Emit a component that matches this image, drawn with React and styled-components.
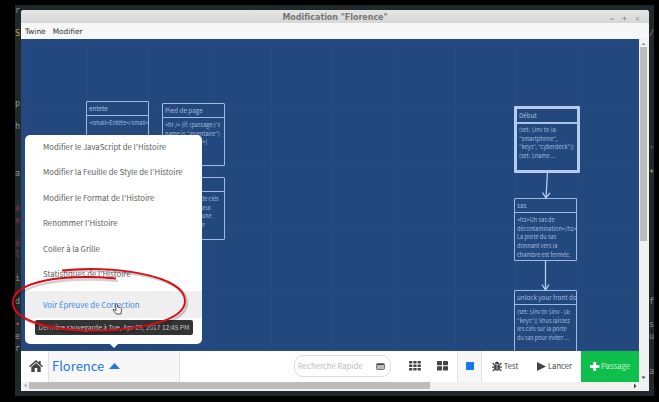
import React from "react";
import styled, { createGlobalStyle, css } from "styled-components";

const Global = createGlobalStyle`
  * { box-sizing: border-box; }
  html, body { margin: 0; background: #000; overflow: hidden; }
  body { font-family: "Noto Sans CJK SC", "Noto Sans", sans-serif; }
`;

const Screen = styled.main`
  width: 659px;
  height: 402px;
  padding: 5px 4px 6px 15px;
  background: #000;
  position: relative;
`;

const Desktop = styled.div`
  width: 639px;
  height: 391px;
  display: grid;
  grid-template-columns: 6px 628px 5px;
  background: #20282b;
  overflow: hidden;
`;

const Gutter = styled.div`
  overflow: hidden;
  font: 8.5px "DejaVu Sans Mono", monospace;
  white-space: pre;
`;

const CodeLine = styled.div`
  height: 11.65px;
  line-height: 11.65px;
  color: ${(p) => p.$color || "#8a938f"};
`;

const Win = styled.section`
  margin-top: 5px;
  width: 628px;
  height: 381px;
  display: flex;
  flex-direction: column;
  background: #fff;
  border-radius: 3px 3px 0 0;
  overflow: hidden;
`;

const TitleBar = styled.header`
  height: 13px;
  flex: none;
  display: grid;
  grid-template-columns: 1fr auto 1fr;
  align-items: center;
  background: linear-gradient(#e6e6e6, #d6d6d6);
  color: #777;
  font: bold 8px/14px "DejaVu Sans", sans-serif;
`;

const Title = styled.span`
  grid-column: 2;
  padding-top: 1px;
  letter-spacing: -0.04px;
`;

const WinButtons = styled.div`
  display: flex;
  justify-content: flex-end;
  padding-right: 8px;
`;

const MenuBar = styled.nav`
  height: 16px;
  flex: none;
  display: flex;
  gap: 7px;
  padding: 1px 0 0 4px;
  background: #f7f7f7;
  color: #333;
  font: 7.4px/15px "DejaVu Sans", sans-serif;
`;

const Body = styled.div`
  height: 343px;
  display: flex;
`;

const Page = styled.div`
  width: 618px;
  display: flex;
  flex-direction: column;
`;

const Canvas = styled.div`
  position: relative;
  height: 312px;
  overflow: hidden;
  background-color: #23487e;
  background-image: linear-gradient(90deg, #284d84 1px, transparent 1px),
    linear-gradient(#284d84 1px, transparent 1px);
  background-size: 61.3px 61.3px;
  background-position: 4.5px 4.5px;
`;

const Card = styled.article`
  position: absolute;
  left: ${(p) => p.$x}px;
  top: ${(p) => p.$y}px;
  width: ${(p) => (p.$start ? 66 : 63)}px;
  height: ${(p) => (p.$start ? 67 : 63)}px;
  border: ${(p) => (p.$start ? "3px solid #b4ccee" : "1px solid #9dbbe0")};
  border-radius: 1px;
  background: #23487e;
  color: #a3bbdb;
  overflow: hidden;
`;

const CardTitle = styled.h3`
  margin: 0;
  height: ${(p) => (p.$start ? 15 : 14)}px;
  padding-left: 2px;
  border-bottom: ${(p) => (p.$start ? "2px solid #a9c4e8" : "1px solid #9dbbe0")};
  font-weight: 400;
  font-size: 6.3px;
  line-height: 13px;
  white-space: nowrap;
`;

const CardText = styled.p`
  margin: 0;
  padding: ${(p) => (p.$start ? 2 : 3)}px 0 0 2px;
  font-size: 5.6px;
  line-height: 8.7px;
  white-space: pre;
`;

const Links = styled.svg`
  position: absolute;
  left: 0;
  top: 0;
`;

const Toolbar = styled.footer`
  height: 31px;
  display: flex;
  align-items: stretch;
  background: #fff;
  color: #444;
`;

const Tool = styled.div`
  width: ${(p) => p.$w}px;
  flex: none;
  display: flex;
  align-items: center;
  justify-content: center;
  gap: 2px;
  font-size: 7.7px;
  line-height: 12px;
  padding-bottom: 1px;
  ${(p) => p.$active && css`
    background: #f7f7f7;
    border: solid #e2e2e2;
    border-width: 0 1px;
  `}
`;

const HomeTool = styled(Tool)`
  padding-left: 3px;
`;

const StoryName = styled(Tool)`
  justify-content: flex-start;
  padding-left: 3px;
  gap: 5px;
  color: #2379dd;
  font-size: 13px;
  line-height: 20px;
`;

const Spacer = styled.div`
  flex: 1;
`;

const Search = styled.div`
  width: 97px;
  height: 22px;
  margin: 4px 9px 0 0;
  padding: 0 5px 0 3px;
  display: flex;
  align-items: center;
  justify-content: space-between;
  border: 1.5px solid #ddd;
  border-radius: 9px;
  color: #bbb;
  font-size: 7.7px;
  line-height: 12px;
`;

const NewPassage = styled(Tool)`
  background: #0fbf4b;
  color: #c5f2d3;
  gap: 1px;
`;

const VScroll = styled.div`
  width: 10px;
  padding: 0 2px 0 1px;
  display: flex;
  flex-direction: column;
  align-items: center;
  background: #f1f1f1;
`;

const VThumb = styled.div`
  width: 7px;
  height: 194px;
  background: #bcbcbc;
`;

const HScroll = styled.div`
  height: 9px;
  flex: none;
  display: flex;
  background: #f1f1f1;
`;

const HThumb = styled.div`
  width: 401px;
  height: 7px;
  background: #bcbcbc;
`;

const ArrowBox = styled.svg`
  flex: none;
`;

const Popup = styled.div`
  position: absolute;
  left: 25px;
  top: 135px;
  width: 177px;
  height: 209px;
  background: #fff;
  border-radius: 5px;
  &::after {
    content: "";
    position: absolute;
    left: 85px;
    top: 209px;
    border: 4px solid transparent;
    border-top-color: #fff;
    border-bottom: 0;
  }
`;

const MenuList = styled.ul`
  list-style: none;
  margin: 0;
  padding: 0;
`;

const MenuItem = styled.li`
  height: ${(p) => (p.$selected ? 27 : 25.4)}px;
  margin-top: ${(p) => (p.$selected ? 4 : 0)}px;
  padding-left: 18px;
  line-height: ${(p) => (p.$selected ? 27 : 24.8)}px;
  font-size: 7.77px;
  white-space: nowrap;
  color: ${(p) => (p.$selected ? "#3a88e0" : "#606060")};
  background: ${(p) => (p.$selected ? "#efefef" : "transparent")};
`;

const Tooltip = styled.div`
  position: absolute;
  left: 10px;
  top: 185px;
  width: 158px;
  height: 15px;
  border-radius: 2px;
  background: #333;
  color: #c4c4c4;
  font-size: 6.6px;
  line-height: 15px;
  text-align: center;
  white-space: nowrap;
`;

const Annotation = styled.svg`
  position: absolute;
  left: 0;
  top: 250px;
`;

const items = [
  "Modifier le JavaScript de l'Histoire",
  "Modifier la Feuille de Style de l'Histoire",
  "Modifier le Format de l'Histoire",
  "Renommer l'Histoire",
  "Coller à la Grille",
  "Statistiques de l'Histoire",
];

const cards = [
  { x: 65, y: 62, title: "entete", text: "<small>Entête</small>" },
  { x: 141, y: 64, title: "Pied de page", text: "<hr /> (if: (passage:)'s\nname is \"inventaire\")\n[[Retour->inv ->]" },
  { x: 141, y: 138, title: "", text: "Un trousseau de clés\nsur lequel un seul\nmot est écrit : une\nclé alambiquée" },
  { x: 493, y: 67, start: true, title: "Début", text: "(set: $inv to (a:\n\"smartphone\",\n\"keys\", \"cyberdeck\"))\n(set: $name ..." },
  { x: 493, y: 159, title: "sas", text: "<h2>Un sas de\ndécontamination</h2>\nLa porte du sas\ndonnant vers la\nchambre est fermée." },
  { x: 493, y: 251, title: "unlock your front doo", text: "(set: $inv to $inv - (a:\n\"keys\")) Vous laissez\nles clés sur la porte\ndu sas pour éviter ..." },
];

const leftCode = { 0: ["r"], 2: ["S", "#c9a24a"], 8: ["p"], 10: ["h"], 14: ["a"], 17: ["é", "#8c3550"], 18: ["e", "#8c3550"], 20: ["é", "#8c3550"], 21: ["l", "#8c3550"], 23: ["i"], 25: ["d"], 27: ["•", "#b04550"], 28: ["e"], 29: ["r"] };
const rightCode = { 2: ["/", "#8f79a8"], 10: [" l", "#a9b665"], 12: ["'a"], 14: ["*", "#a9b665"], 25: ["f"], 27: ["s"], 28: ["u"], 31: ["a"] };

function Code({ lines }) {
  return (
    <Gutter>
      {Array.from({ length: 33 }, (_, i) => (
        <CodeLine key={i} $color={lines[i]?.[1]}>{lines[i]?.[0] || " "}</CodeLine>
      ))}
    </Gutter>
  );
}

const HomeIcon = () => (
  <svg width="14" height="12" viewBox="0 0 14 12" fill="#444">
    <path d="M7 0 0 6.200l1 1L7 2l6 5.200 1-1-2.300-2V1H10v1.600zM7 3 2.300 7.100V12H5.700V8h2.600v4h3.400V7.100z" />
  </svg>
);
const Blocks = ({ n, rows, w, h }) => (
  <svg width="12" height="10">
    {Array.from({ length: n * rows }, (_, i) => (
      <rect key={i} x={(i % n) * (w + 1)} y={Math.floor(i / n) * (h + 1)} width={w} height={h} rx=".4" fill="#444" />
    ))}
  </svg>
);
const BugIcon = () => (
  <svg width="10" height="11" viewBox="0 0 10 11">
    <path d="M2.800 3a2.200 2.600 0 0 1 4.400 0z" fill="#444" />
    <path d="M2.200 3.600h2.500v6.600Q2.200 9.800 2.200 7zM5.300 3.600h2.500V7q0 2.800-2.500 3.200z" fill="#444" />
    <path d="M.6 2 2.500 4M9.400 2 7.500 4M0 6.200h2.400M10 6.200H7.600M.7 10l2-2M9.300 10l-2-2" stroke="#444" strokeWidth="1.200" />
  </svg>
);

export default function App() {
  return (
    <Screen>
      <Global />
      <Desktop>
        <Code lines={leftCode} />
        <Win>
          <TitleBar>
            <Title>Modification "Florence"</Title>
            <WinButtons>
              <svg width="32" height="8" stroke="#999" strokeWidth="1" fill="none">
                <path d="M1 5h4M13.500 4.500h4M15.500 2.500v4M27 3l3 3.500M30 3l-3 3.500" />
              </svg>
            </WinButtons>
          </TitleBar>
          <MenuBar><span>Twine</span><span>Modifier</span></MenuBar>
          <Body>
            <Page>
              <Canvas>
                {cards.map((c, i) => (
                  <Card key={i} $x={c.x} $y={c.y} $start={c.start}>
                    <CardTitle $start={c.start}>{c.title}</CardTitle>
                    <CardText $start={c.start}>{c.text}</CardText>
                  </Card>
                ))}
                <Links width="618" height="312" fill="none" stroke="#b5cceb" strokeWidth="1.300">
                  <path d="M526.500 133 525 159M521.500 153.500l3.300 5.500 4.200-5M524.500 222v29M521 245.500l3.500 5.500 3.500-5.500" />
                </Links>
              </Canvas>
              <Toolbar>
                <HomeTool $w={27}><HomeIcon /></HomeTool>
                <StoryName $w={132} $active>
                  <span>Florence</span>
                  <svg width="11" height="6"><path d="M0 6 5.500 0 11 6z" fill="#2379dd" /></svg>
                </StoryName>
                <Spacer />
                <Search>
                  <span>Recherche Rapide</span>
                  <svg width="9" height="7"><rect x=".5" y=".5" width="8" height="6" rx=".8" fill="#bbb" stroke="#777" /><path d="M1 1.500h7" stroke="#444" /></svg>
                </Search>
                <Tool $w={29}><Blocks n={3} rows={3} w={3.300} h={2.500} /></Tool>
                <Tool $w={28}><Blocks n={2} rows={2} w={5} h={4.200} /></Tool>
                <Tool $w={25} $active><svg width="8" height="8"><rect width="8" height="8" fill="#1976e8" /></svg></Tool>
                <Tool $w={46}><BugIcon />Test</Tool>
                <Tool $w={53}><svg width="9" height="9"><path d="M0 0 9 4.500 0 9z" fill="#444" /></svg>Lancer</Tool>
                <NewPassage $w={58}>
                  <svg width="10" height="9"><path d="M4.700 0v9M0 4.500h9.400" stroke="#fff" strokeWidth="2.800" /></svg>
                  Passage
                </NewPassage>
              </Toolbar>
            </Page>
            <VScroll>
              <ArrowBox width="7" height="8"><path d="M1.500 6 3.500 3.500l2 2.500z" fill="#999" /></ArrowBox>
              <VThumb />
              <Spacer />
              <ArrowBox width="7" height="9"><path d="M1.500 3.500h4l-2 2.500z" fill="#444" /></ArrowBox>
            </VScroll>
          </Body>
          <HScroll>
            <ArrowBox width="8" height="8"><path d="M5.500 1.500v4L3 3.500z" fill="#aaa" /></ArrowBox>
            <HThumb />
            <Spacer />
            <ArrowBox width="17" height="8"><path d="M2 1.500v5l2.500-2.500z" fill="#444" /></ArrowBox>
          </HScroll>
        </Win>
        <Code lines={rightCode} />
      </Desktop>
      <Popup>
        <MenuList>
          {items.map((t) => <MenuItem key={t}>{t}</MenuItem>)}
          <MenuItem $selected>Voir Épreuve de Correction</MenuItem>
        </MenuList>
        <Tooltip>Dernière sauvegarde à Tue, Apr 25, 2017 12:45 PM</Tooltip>
      </Popup>
      <Annotation width="210" height="100" viewBox="0 250 210 100" fill="none">
        <path d="M115.500 304.500q1.200-1.200 2 .3v2.200l3.200.8q1.100.4.900 2l-.7 4.200h-4.600l-3.300-4q.2-1.200 1.400-.4l1.600 1z" fill="#f5f5f5" stroke="#444" strokeWidth=".9" />
        <path d="M64 272C110 267 188 276 187 303C187 322 145 333 94 333C48 333 13 321 15 303C17 285 62 276 118 281" stroke="#000" strokeOpacity=".18" strokeWidth="2.500" />
        <path d="M62 270.500C108 265 185 274 185 301C185 320 143 330.500 92 330.500C46 330.500 11 319 13 301C15 282 60 273.500 116 278.500" stroke="#dc0a14" strokeWidth="1.900" />
      </Annotation>
    </Screen>
  );
}
